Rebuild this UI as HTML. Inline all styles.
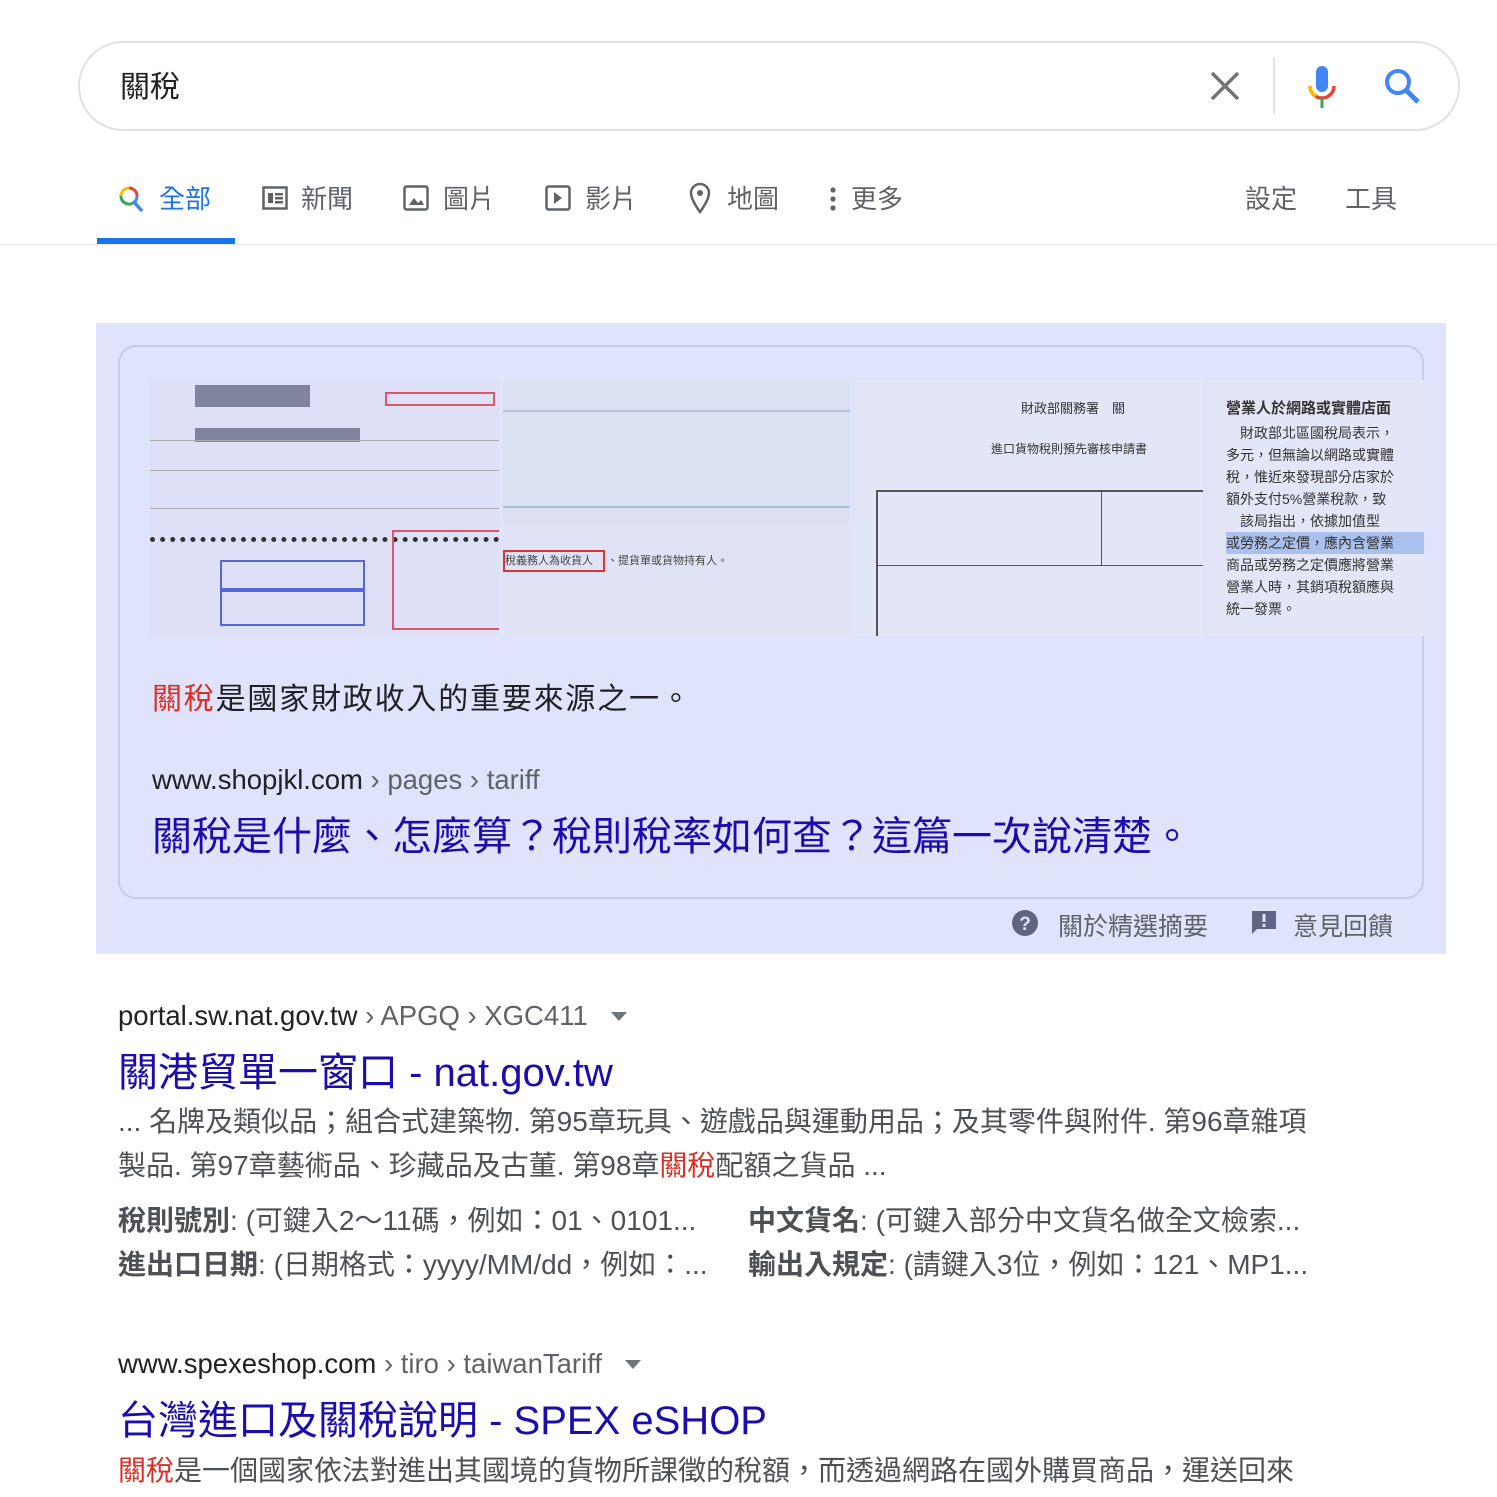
<!DOCTYPE html>
<html><head><meta charset="utf-8">
<style>
*{margin:0;padding:0;box-sizing:border-box}
body{width:1497px;height:1497px;overflow:hidden;background:#fff;font-family:"Liberation Sans","Noto Sans CJK TC",sans-serif;position:relative;color:#202124}
.a{position:absolute;white-space:nowrap}
.search{left:78px;top:41px;width:1382px;height:90px;border:2px solid #dfe1e5;border-radius:46px}
.tab{top:182px;font-size:26px;color:#5f6368;line-height:34px}
.feat{left:96px;top:323px;width:1350px;height:631px;background:#e0e3fc}
.card{left:118px;top:345px;width:1306px;height:554px;border:2px solid #c7cae8;border-radius:18px}
.img{top:380px;height:256px;background:#dde0f6;overflow:hidden}
.url{font-size:27.5px;color:#202124}
.url span{color:#5f6368}
.t{font-size:40px;color:#1a0dab}
.s{font-size:28px;color:#4d5156;line-height:44px}
.em{color:#d93025}
.b{font-weight:bold}
</style></head><body>
<div class="a search"></div>
<div class="a" style="left:120px;top:62px;font-size:30px;color:#202124">關稅</div>
<svg class="a" style="left:1208px;top:69px" width="34" height="34" viewBox="0 0 34 34"><path d="M4 4L30 30M30 4L4 30" stroke="#70757a" stroke-width="3.5"/></svg>
<div class="a" style="left:1273px;top:58px;width:2px;height:56px;background:#dfe1e5"></div>
<svg class="a" style="left:1304px;top:64px" width="36" height="46" viewBox="0 0 36 46"><rect x="12" y="2" width="12" height="26" rx="6" fill="#4285f4"/><path d="M6 22a12 12 0 0 0 24 0" fill="none" stroke="#ea4335" stroke-width="3.5"/><path d="M6 22a12 12 0 0 0 6 10" fill="none" stroke="#fbbc05" stroke-width="3.5"/><rect x="16.5" y="34" width="3" height="10" fill="#34a853"/></svg>
<svg class="a" style="left:1382px;top:66px" width="40" height="40" viewBox="0 0 40 40"><circle cx="16" cy="16" r="11" fill="none" stroke="#4285f4" stroke-width="4"/><path d="M24 24L36 36" stroke="#4285f4" stroke-width="5"/></svg>

<svg class="a" style="left:118px;top:185px" width="28" height="28" viewBox="0 0 28 28"><path d="M11 3a8 8 0 0 1 8 8" fill="none" stroke="#ea4335" stroke-width="3"/><path d="M19 11a8 8 0 0 1-4 7" fill="none" stroke="#4285f4" stroke-width="3"/><path d="M3 11a8 8 0 0 1 8-8" fill="none" stroke="#fbbc05" stroke-width="3"/><path d="M3 11a8 8 0 0 0 12 7" fill="none" stroke="#34a853" stroke-width="3"/><path d="M16 17l8 9" stroke="#4285f4" stroke-width="3.5"/></svg>
<div class="a tab" style="left:159px;color:#1a73e8">全部</div>
<svg class="a" style="left:262px;top:186px" width="26" height="24"><rect x="1.5" y="1.5" width="23" height="21" fill="none" stroke="#5f6368" stroke-width="2.5"/><rect x="6" y="7" width="5" height="10" fill="#5f6368"/><rect x="13" y="7" width="8" height="2.5" fill="#5f6368"/><rect x="13" y="11" width="8" height="2.5" fill="#5f6368"/><rect x="13" y="15" width="8" height="2.5" fill="#5f6368"/></svg>
<div class="a tab" style="left:301px">新聞</div>
<svg class="a" style="left:403px;top:185px" width="26" height="26"><rect x="1.5" y="1.5" width="23" height="23" rx="2" fill="none" stroke="#5f6368" stroke-width="2.5"/><path d="M6 20l5-7 4 5 3-3 3 5z" fill="#5f6368"/></svg>
<div class="a tab" style="left:443px">圖片</div>
<svg class="a" style="left:545px;top:185px" width="26" height="26"><rect x="1.5" y="1.5" width="23" height="23" rx="2" fill="none" stroke="#5f6368" stroke-width="2.5"/><path d="M9 7v12l8-6z" fill="#5f6368"/></svg>
<div class="a tab" style="left:585px">影片</div>
<svg class="a" style="left:689px;top:182px" width="22" height="32"><path d="M11 30C11 30 2 18 2 11a9 9 0 0 1 18 0c0 7-9 19-9 19z" fill="none" stroke="#5f6368" stroke-width="2.5"/><circle cx="11" cy="11" r="3" fill="#5f6368"/></svg>
<div class="a tab" style="left:727px">地圖</div>
<svg class="a" style="left:829px;top:186px" width="8" height="26"><circle cx="4" cy="4" r="2.6" fill="#5f6368"/><circle cx="4" cy="13" r="2.6" fill="#5f6368"/><circle cx="4" cy="22" r="2.6" fill="#5f6368"/></svg>
<div class="a tab" style="left:851px">更多</div>
<div class="a tab" style="left:1245px">設定</div>
<div class="a tab" style="left:1345px">工具</div>
<div class="a" style="left:97px;top:238px;width:138px;height:6px;background:#1a73e8"></div>
<div class="a" style="left:0;top:244px;width:1497px;height:1px;background:#ebebeb"></div>

<div class="a feat"></div>
<div class="a card"></div>
<div class="a img" style="left:150px;width:349px">
 <div class="a" style="left:45px;top:5px;width:115px;height:22px;background:#80849f"></div>
 <div class="a" style="left:45px;top:48px;width:165px;height:14px;background:#80849f"></div>
 <div class="a" style="left:0;top:60px;width:349px;height:1px;background:#aaa"></div>
 <div class="a" style="left:0;top:90px;width:349px;height:1px;background:#aaa"></div>
 <div class="a" style="left:0;top:128px;width:349px;height:1px;background:#aaa"></div>
 <div class="a" style="left:0;top:157px;width:349px;height:6px;border-top:5px dotted #333"></div>
 <div class="a" style="left:70px;top:180px;width:145px;height:30px;border:2px solid #5566dd"></div>
 <div class="a" style="left:70px;top:210px;width:145px;height:36px;border:2px solid #5566dd"></div>
 <div class="a" style="left:242px;top:150px;width:110px;height:100px;border:2px solid #dd5566"></div>
 <div class="a" style="left:235px;top:12px;width:110px;height:14px;border:2px solid #dd5566"></div>
</div>
<div class="a img" style="left:503px;width:347px;background:#dbe0f2">
 <div class="a" style="left:0;top:30px;width:347px;height:2px;background:#b5c4d6"></div>
 <div class="a" style="left:0;top:126px;width:347px;height:2px;background:#a9c0d5"></div>
 <div class="a" style="left:0;top:144px;width:347px;height:112px;background:#e0e3f5"></div>
 <div class="a" style="left:0;top:170px;width:102px;height:22px;border:2px solid #d33;font-size:11px;line-height:18px;color:#444">稅義務人為收貨人</div>
 <div class="a" style="left:104px;top:172px;font-size:11px;color:#444">、提貨單或貨物持有人。</div>
</div>
<div class="a img" style="left:856px;width:347px;background:#e3e6f6">
 <div class="a" style="left:165px;top:18px;font-size:13px;color:#333">財政部關務署　關</div>
 <div class="a" style="left:135px;top:60px;font-size:12px;color:#333">進口貨物稅則預先審核申請書</div>
 <div class="a" style="left:20px;top:110px;width:327px;height:2px;background:#555"></div>
 <div class="a" style="left:20px;top:110px;width:2px;height:146px;background:#555"></div>
 <div class="a" style="left:20px;top:185px;width:327px;height:1px;background:#555"></div>
 <div class="a" style="left:245px;top:110px;width:1px;height:75px;background:#555"></div>
</div>
<div class="a img" style="left:1208px;width:216px;background:#e3e6f6;font-size:14px;line-height:22px;color:#333">
 <div class="a" style="left:18px;top:18px;font-weight:bold;font-size:15px">營業人於網路或實體店面</div>
 <div class="a" style="left:18px;top:42px">　財政部北區國稅局表示，</div>
 <div class="a" style="left:18px;top:64px">多元，但無論以網路或實體</div>
 <div class="a" style="left:18px;top:86px">稅，惟近來發現部分店家於</div>
 <div class="a" style="left:18px;top:108px">額外支付5%營業稅款，致</div>
 <div class="a" style="left:18px;top:130px">　該局指出，依據加值型</div>
 <div class="a" style="left:18px;top:152px;background:#a9c1ec;width:200px">或勞務之定價，應內含營業</div>
 <div class="a" style="left:18px;top:174px">商品或勞務之定價應將營業</div>
 <div class="a" style="left:18px;top:196px">營業人時，其銷項稅額應與</div>
 <div class="a" style="left:18px;top:218px">統一發票。</div>
</div>
<div class="a" style="left:152px;top:674px;font-size:30px;color:#202124;letter-spacing:1.8px"><span class="em">關稅</span>是國家財政收入的重要來源之一。</div>
<div class="a url" style="left:152px;top:764px">www.shopjkl.com<span> › pages › tariff</span></div>
<div class="a t" style="left:152px;top:804px">關稅是什麼、怎麼算？稅則稅率如何查？這篇一次說清楚。</div>
<svg class="a" style="left:1011px;top:909px" width="28" height="28"><circle cx="14" cy="14" r="13" fill="#5f6580"/><text x="14" y="21" text-anchor="middle" font-size="19" font-weight="bold" fill="#e0e3fc" font-family="Liberation Sans">?</text></svg>
<div class="a" style="left:1058px;top:907px;font-size:25px;color:#5f6368">關於精選摘要</div>
<svg class="a" style="left:1251px;top:910px" width="26" height="26"><path d="M1 1h24v18H6l-5 5z" fill="#5f6580"/><rect x="11.5" y="4" width="3" height="8" fill="#e0e3fc"/><rect x="11.5" y="14" width="3" height="3" fill="#e0e3fc"/></svg>
<div class="a" style="left:1293px;top:907px;font-size:25px;color:#5f6368">意見回饋</div>

<div class="a url" style="left:118px;top:1000px">portal.sw.nat.gov.tw<span> › APGQ › XGC411</span></div>
<svg class="a" style="left:610px;top:1011px" width="18" height="12"><path d="M1 1h16L9 10z" fill="#70757a"/></svg>
<div class="a t" style="left:118px;top:1040px">關港貿單一窗口 - nat.gov.tw</div>
<div class="a s" style="left:118px;top:1100px">... 名牌及類似品；組合式建築物. 第95章玩具、遊戲品與運動用品；及其零件與附件. 第96章雜項<br>製品. 第97章藝術品、珍藏品及古董. 第98章<span class="em">關稅</span>配額之貨品 ...</div>
<div class="a s" style="left:118px;top:1199px"><span class="b">稅則號別</span>: (可鍵入2～11碼，例如：01、0101...<br><span class="b">進出口日期</span>: (日期格式：yyyy/MM/dd，例如：...</div>
<div class="a s" style="left:748px;top:1199px"><span class="b">中文貨名</span>: (可鍵入部分中文貨名做全文檢索...<br><span class="b">輸出入規定</span>: (請鍵入3位，例如：121、MP1...</div>

<div class="a url" style="left:118px;top:1348px">www.spexeshop.com<span> › tiro › taiwanTariff</span></div>
<svg class="a" style="left:624px;top:1359px" width="18" height="12"><path d="M1 1h16L9 10z" fill="#70757a"/></svg>
<div class="a t" style="left:118px;top:1388px">台灣進口及關稅說明 - SPEX eSHOP</div>
<div class="a s" style="left:118px;top:1449px"><span class="em">關稅</span>是一個國家依法對進出其國境的貨物所課徵的稅額，而透過網路在國外購買商品，運送回來</div>
</body></html>
